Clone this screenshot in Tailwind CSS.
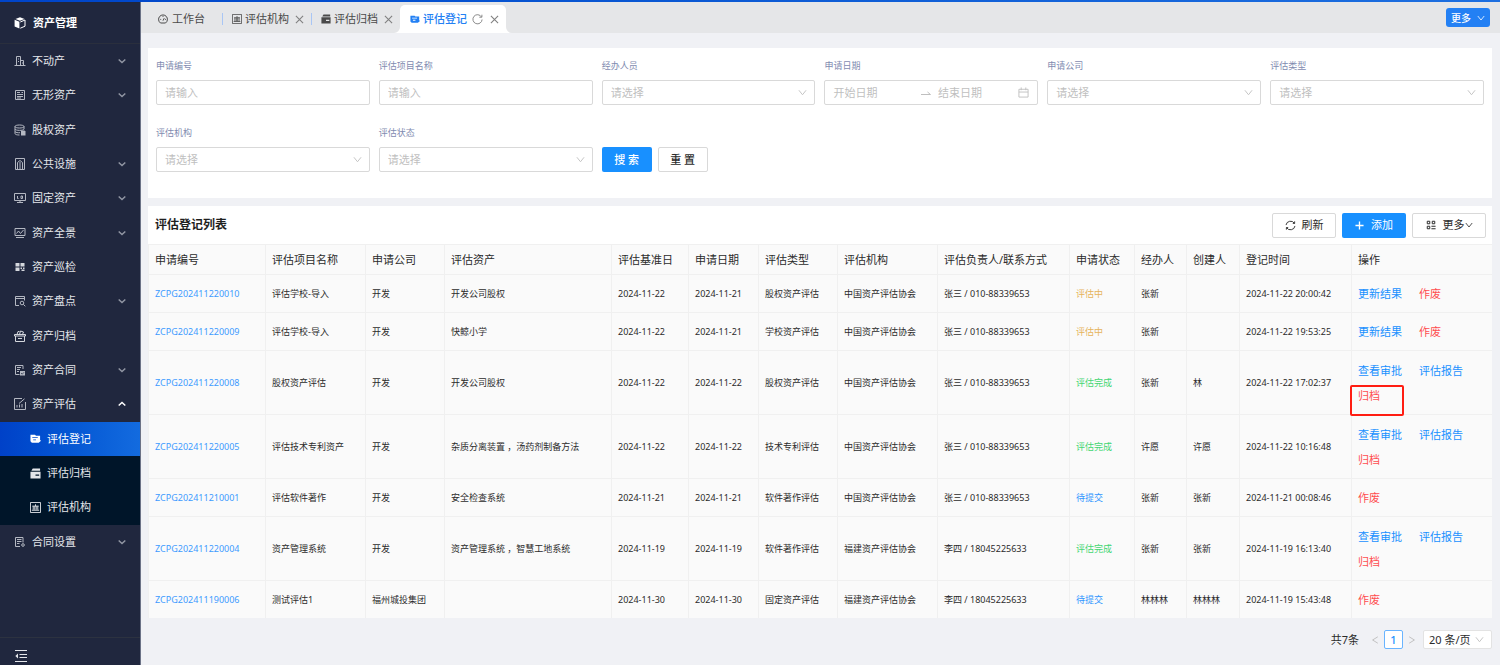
<!DOCTYPE html>
<html lang="zh-CN">
<head>
  <meta charset="UTF-8" />
  <meta name="viewport" content="width=device-width, initial-scale=1" />
  <title>资产管理 - 评估登记</title>
  <script src="https://cdn.jsdelivr.net/npm/@tailwindcss/browser@4"></script>
</head>
<body class="bg-[#f0f1f5] font-['Noto_Sans','Noto_Sans_CJK_SC',sans-serif] text-[11px] leading-4 text-[#2b2b2b]">

  <!-- Icon sprite -->
  <svg class="hidden" xmlns="http://www.w3.org/2000/svg">
    <symbol id="i-cube" viewBox="0 0 12 12"><path fill="currentColor" d="M6 .3 10.6 2 6 3.8 1.4 2zM.6 2.8l4.8 2v6.7L.6 9.4z"/><path fill="none" stroke="currentColor" d="M6.3 5 11 3v6.2l-4.7 2"/></symbol>
    <symbol id="i-building" viewBox="0 0 12 12"><path fill="none" stroke="currentColor" d="M.5 10.5h11M2.5 10.5v-9h4v9M6.5 5.5h3v5M4 4h1M4 6.5h1M8 8h1"/></symbol>
    <symbol id="i-doc" viewBox="0 0 12 12"><path fill="none" stroke="currentColor" d="M1.5 1.5h9v9h-9zM3 3.5h3M3 5.5h6M3 7.5h6M7.5 3.5H9M3 9h4"/></symbol>
    <symbol id="i-coins" viewBox="0 0 12 12"><path fill="none" stroke="currentColor" d="M1 2.5c0-2 9-2 9 0s-9 2-9 0v7c0 1 2 1.500 4.500 1.500M1 5c0 1.800 9 1.800 9 0V2.500M1 7.500C1.500 8.500 4 9 6 8.700"/><path fill="currentColor" d="M7 6.500h3.500l1 1v4H7z"/></symbol>
    <symbol id="i-facility" viewBox="0 0 12 12"><path fill="none" stroke="currentColor" d="M1.500.5h9v11h-9zM3.500 11V4.500L6 2.500l2.500 2V11M6 4v7"/></symbol>
    <symbol id="i-monitor" viewBox="0 0 12 12"><path fill="none" stroke="currentColor" d="M.5 1.500h11v7H.5zM3 10.500h6M6 8.500v2M3.500 4v2.500h1M7 4h1.500v2.500H7z"/></symbol>
    <symbol id="i-chart" viewBox="0 0 12 12"><path fill="none" stroke="currentColor" d="M1 1.500h10v7H1zM2.500 6.500l2-2.500 2 2.500L9.500 3M2 10.500h8"/></symbol>
    <symbol id="i-blocks" viewBox="0 0 12 12"><path fill="currentColor" d="M1.500 2h4v3.500h-4zM6.500 2h4v3.500h-4zM1.500 6.500h4V10h-4zM6.500 6.500H8V8H6.500zM9 6.500h1.500V8H9zM7.500 8.500h3V10h-3z"/></symbol>
    <symbol id="i-search" viewBox="0 0 12 12"><path fill="none" stroke="currentColor" d="M5 10.500H1.500v-9h9v4M1.500 3.500h9"/><circle cx="8" cy="8" r="1.800" fill="none" stroke="currentColor"/><path stroke="currentColor" d="m9.300 9.300 2 2"/></symbol>
    <symbol id="i-box" viewBox="0 0 12 12"><path fill="none" stroke="currentColor" d="M1.500 6v5.500h9V6M.5 6V4.500h11V6zM3 4.500l1-3h1.500M5.500 4.500l1-3.500 3 1-1 2.500M4 8.500h4"/></symbol>
    <symbol id="i-contract" viewBox="0 0 12 12"><path fill="none" stroke="currentColor" d="M5.500 10.500h-4v-9H9V5M3 3.500h4M3 5.500h3M3 7.500h2"/><path fill="currentColor" d="M6 7h5v4.500H6z"/><path stroke="#20273e" stroke-width=".7" d="m7 9 1.200 1.200L10 8.300" fill="none"/></symbol>
    <symbol id="i-assess" viewBox="0 0 12 12"><path fill="none" stroke="currentColor" d="M8 .5H.5v11h11V4M3 9.500V7M5.500 9.500v-3M8 9.500V6M5 5.500 10.500.8"/></symbol>
    <symbol id="i-folder" viewBox="0 0 12 12"><path fill="currentColor" fill-rule="evenodd" d="M.5 2h5l1 1h4.500v4.500l1 1L9.500 10.500H2L.5 9zM2.500 4.500v1h6v-1zM3.500 7v1h3V7z"/></symbol>
    <symbol id="i-archive" viewBox="0 0 12 12"><path fill="currentColor" fill-rule="evenodd" d="M3 .5h8v2.500H1.500zM.5 4h11v7.500H.5zM6 7v1.500h4V7z"/></symbol>
    <symbol id="i-org" viewBox="0 0 12 12"><path fill="none" stroke="currentColor" d="M.5.5h11v11H.5zM2.500 4.500h7M6 2.500v2M3.500 4.500v4M5.200 4.500v4M6.800 4.500v4M8.500 4.500v4M2 9h8"/></symbol>
    <symbol id="i-setting" viewBox="0 0 12 12"><path fill="none" stroke="currentColor" d="M6 10.500H1.500v-9H9v5M3 3.500h4.500M3 5.500h4.500M3 7.500h2.500"/><circle cx="9" cy="9" r="1.300" fill="none" stroke="currentColor"/></symbol>
    <symbol id="i-gauge" viewBox="0 0 12 12"><path fill="none" stroke="currentColor" stroke-width="1.200" d="M3 10.800a5.300 5.300 0 1 1 6 0zM6 8l1.500-3M2.800 6.500h1M6 2.500v1M8.500 6.500h1"/></symbol>
    <symbol id="i-menu" viewBox="0 0 12 12"><path fill="none" stroke="currentColor" d="M0 .5h12M4.500 4.500H12M4.500 7.500H12M0 11.500h12"/><path fill="currentColor" d="M3 3.500v5L.3 6z"/></symbol>
    <symbol id="i-down" viewBox="0 0 10 10"><path fill="none" stroke="currentColor" d="M1 2.500 5 7.500l4-5"/></symbol>
    <symbol id="i-arrow" viewBox="0 0 8 8"><path fill="none" stroke="currentColor" stroke-width="1.500" d="M.7 2.500 4 5.500l3.300-3"/></symbol>
    <symbol id="i-left" viewBox="0 0 10 10"><path fill="none" stroke="currentColor" stroke-width="1.200" d="M8.500 1 2 5l6.500 4"/></symbol>
    <symbol id="i-right" viewBox="0 0 10 10"><path fill="none" stroke="currentColor" stroke-width="1.200" d="M1.500 1 8 5 1.500 9"/></symbol>
    <symbol id="i-close" viewBox="0 0 10 10"><path fill="none" stroke="currentColor" stroke-width="1.200" d="m1 1 8 8M9 1 1 9"/></symbol>
    <symbol id="i-reload" viewBox="0 0 12 12"><path fill="none" stroke="currentColor" d="M10.300 3.200A5 5 0 1 0 11 6M10.800.8v2.700H8"/></symbol>
    <symbol id="i-sync" viewBox="0 0 12 12"><path fill="none" stroke="currentColor" d="M1.100 5.500a5 5 0 0 1 9.200-1.800M10.900 6.500a5 5 0 0 1-9.200 1.800M10.500 1.500v2.200H8.500M1.500 10.500V8.300h2"/></symbol>
    <symbol id="i-plus" viewBox="0 0 10 10"><path fill="none" stroke="currentColor" stroke-width="1.500" d="M5 .5v9M.5 5h9"/></symbol>
    <symbol id="i-apps" viewBox="0 0 12 12"><path fill="none" stroke="currentColor" stroke-width="1.200" d="M1.500 1.500h3v3h-3zM7.500 1.500h3v3h-3zM1.500 7.500h3v3h-3zM6.500 7.500h5M6.500 10.500h5"/></symbol>
    <symbol id="i-swap" viewBox="0 0 10 10"><path fill="none" stroke="currentColor" d="M0 6.500h9.500L6.500 4"/></symbol>
    <symbol id="i-calendar" viewBox="0 0 12 12"><path fill="none" stroke="currentColor" d="M1 2.500h10V11H1zM1 5.500h10M3.500.5v3M8.500.5v3"/></symbol>
  </svg>

  <div class="flex min-h-screen flex-col">
    <div class="h-[2px] bg-linear-to-r from-[#0044c9] to-[#1d6fe0]"></div>

    <div class="flex flex-1">
      <!-- Sidebar -->
      <aside class="flex w-[141px] shrink-0 flex-col border-r border-[#6b7286] bg-[#20273e] text-[#e4e6ea]">
        <div class="flex h-[42px] items-center gap-[7px] border-b border-[#2a2f3d] pl-[14px] font-bold text-white">
          <svg class="size-3"><use href="#i-cube" /></svg>
          <h1>资产管理</h1>
        </div>
        <nav class="flex h-[515px] flex-col">
          <a href="#" class="flex flex-1 items-center px-[14px]"><svg class="mr-[6px] size-3 text-[#b4b8c2]"><use href="#i-building" /></svg>不动产<svg class="ml-auto size-2 text-[#9196a3]"><use href="#i-arrow" /></svg></a>
          <a href="#" class="flex flex-1 items-center px-[14px]"><svg class="mr-[6px] size-3 text-[#b4b8c2]"><use href="#i-doc" /></svg>无形资产<svg class="ml-auto size-2 text-[#9196a3]"><use href="#i-arrow" /></svg></a>
          <a href="#" class="flex flex-1 items-center px-[14px]"><svg class="mr-[6px] size-3 text-[#b4b8c2]"><use href="#i-coins" /></svg>股权资产</a>
          <a href="#" class="flex flex-1 items-center px-[14px]"><svg class="mr-[6px] size-3 text-[#b4b8c2]"><use href="#i-facility" /></svg>公共设施<svg class="ml-auto size-2 text-[#9196a3]"><use href="#i-arrow" /></svg></a>
          <a href="#" class="flex flex-1 items-center px-[14px]"><svg class="mr-[6px] size-3 text-[#b4b8c2]"><use href="#i-monitor" /></svg>固定资产<svg class="ml-auto size-2 text-[#9196a3]"><use href="#i-arrow" /></svg></a>
          <a href="#" class="flex flex-1 items-center px-[14px]"><svg class="mr-[6px] size-3 text-[#b4b8c2]"><use href="#i-chart" /></svg>资产全景<svg class="ml-auto size-2 text-[#9196a3]"><use href="#i-arrow" /></svg></a>
          <a href="#" class="flex flex-1 items-center px-[14px]"><svg class="mr-[6px] size-3 text-[#d4d7dd]"><use href="#i-blocks" /></svg>资产巡检</a>
          <a href="#" class="flex flex-1 items-center px-[14px]"><svg class="mr-[6px] size-3 text-[#b4b8c2]"><use href="#i-search" /></svg>资产盘点<svg class="ml-auto size-2 text-[#9196a3]"><use href="#i-arrow" /></svg></a>
          <a href="#" class="flex flex-1 items-center px-[14px]"><svg class="mr-[6px] size-3 text-[#d4d7dd]"><use href="#i-box" /></svg>资产归档</a>
          <a href="#" class="flex flex-1 items-center px-[14px]"><svg class="mr-[6px] size-3 text-[#b4b8c2]"><use href="#i-contract" /></svg>资产合同<svg class="ml-auto size-2 text-[#9196a3]"><use href="#i-arrow" /></svg></a>
          <a href="#" class="flex flex-1 items-center px-[14px]"><svg class="mr-[6px] size-3 text-[#b4b8c2]"><use href="#i-assess" /></svg>资产评估<svg class="ml-auto size-2 rotate-180 text-white"><use href="#i-arrow" /></svg></a>
          <!-- Submenu -->
          <div class="flex flex-3 flex-col bg-[#001529]">
            <a href="#" class="flex flex-1 items-center bg-linear-to-r from-[#0041c8] to-[#136bdf] pl-[30px] text-white"><svg class="mr-[6px] size-[11px]"><use href="#i-folder" /></svg>评估登记</a>
            <a href="#" class="flex flex-1 items-center pl-[30px]"><svg class="mr-[6px] size-[11px]"><use href="#i-archive" /></svg>评估归档</a>
            <a href="#" class="flex flex-1 items-center pl-[30px]"><svg class="mr-[6px] size-[11px]"><use href="#i-org" /></svg>评估机构</a>
          </div>
          <a href="#" class="flex flex-1 items-center px-[14px]"><svg class="mr-[6px] size-3 text-[#b4b8c2]"><use href="#i-setting" /></svg>合同设置<svg class="ml-auto size-2 text-[#9196a3]"><use href="#i-arrow" /></svg></a>
        </nav>
        <div class="mt-auto flex h-7 items-center border-t border-[#2c3240] pt-[9px] pl-[15px]">
          <button type="button" aria-label="收起菜单"><svg class="size-3"><use href="#i-menu" /></svg></button>
        </div>
      </aside>

      <main class="min-w-0 flex-1">
        <!-- Tabs -->
        <div class="flex h-[31px] items-end justify-between bg-[#e5e6e8] pr-[10px] text-[#4a4a4a]">
          <div class="flex h-7 items-center">
            <a href="#" class="flex items-center gap-1 px-[17px]"><svg class="size-[10px]"><use href="#i-gauge" /></svg>工作台</a>
            <a href="#" class="flex h-3 items-center gap-[3px] border-l border-[#a9c6f5] pl-[9px]"><svg class="size-[10px]"><use href="#i-org" /></svg>评估机构</a>
            <button type="button" aria-label="关闭" class="pr-[7px] pl-[6px] text-[#808080]"><svg class="size-[9px]"><use href="#i-close" /></svg></button>
            <a href="#" class="flex h-3 items-center gap-[3px] border-l border-[#a9c6f5] pl-[9px]"><svg class="size-[10px]"><use href="#i-archive" /></svg>评估归档</a>
            <button type="button" aria-label="关闭" class="pl-[6px] text-[#808080]"><svg class="size-[9px]"><use href="#i-close" /></svg></button>
            <div class="flex h-7 items-end">
              <svg class="ml-px size-[6px] text-white" viewBox="0 0 6 6"><path fill="currentColor" d="M6 0v6H0a6 6 0 0 0 6-6z"/></svg>
              <div class="flex h-7 items-center rounded-t-[5px] bg-white pr-[7px] pl-[10px]">
                <a href="#" class="flex items-center gap-[3px] font-medium text-[#2380f4]"><svg class="size-[10px]"><use href="#i-folder" /></svg>评估登记</a>
                <button type="button" aria-label="刷新标签" class="ml-[5px] text-[#808080]"><svg class="size-[11px]"><use href="#i-reload" /></svg></button>
                <button type="button" aria-label="关闭" class="ml-[7px] text-[#808080]"><svg class="size-[9px]"><use href="#i-close" /></svg></button>
              </div>
              <svg class="size-[6px] text-white" viewBox="0 0 6 6"><path fill="currentColor" d="M0 0v6h6a6 6 0 0 1-6-6z"/></svg>
            </div>
          </div>
          <button type="button" class="mb-[6px] flex h-[19px] items-center gap-[6px] rounded-[3px] bg-[#2380f4] px-[5px] text-[10px] font-medium text-white">更多<svg class="size-2"><use href="#i-down" /></svg></button>
        </div>

        <div class="pt-[15px] pr-2 pl-[7px]">
          <!-- Search form -->
          <form class="grid grid-cols-6 gap-x-[9px] gap-y-[19px] bg-white px-2 pt-[10px] pb-[26px]">
            <div>
              <label for="applyNo" class="mb-[6px] block text-[9px] text-[#7f8bb0]">申请编号</label>
              <input id="applyNo" type="text" placeholder="请输入" class="h-[25px] w-full rounded-[2px] border border-[#d9d9d9] px-2 placeholder:text-[#bfbfbf]" />
            </div>
            <div>
              <label for="projectName" class="mb-[6px] block text-[9px] text-[#7f8bb0]">评估项目名称</label>
              <input id="projectName" type="text" placeholder="请输入" class="h-[25px] w-full rounded-[2px] border border-[#d9d9d9] px-2 placeholder:text-[#bfbfbf]" />
            </div>
            <div>
              <label for="handler" class="mb-[6px] block text-[9px] text-[#7f8bb0]">经办人员</label>
              <div class="relative">
                <select id="handler" class="block h-[25px] w-full appearance-none rounded-[2px] border border-[#d9d9d9] px-2 text-[#bfbfbf]"><option>请选择</option></select>
                <svg class="pointer-events-none absolute top-2 right-2 size-[9px] text-[#bfbfbf]"><use href="#i-down" /></svg>
              </div>
            </div>
            <div>
              <label for="startDate" class="mb-[6px] block text-[9px] text-[#7f8bb0]">申请日期</label>
              <div class="flex h-[25px] items-center rounded-[2px] border border-[#d9d9d9] px-2 text-[#bfbfbf]">
                <input id="startDate" type="text" placeholder="开始日期" class="w-0 flex-1 placeholder:text-[#bfbfbf]" />
                <svg class="mx-[7px] size-[10px] shrink-0"><use href="#i-swap" /></svg>
                <input id="endDate" type="text" placeholder="结束日期" aria-label="结束日期" class="w-0 flex-1 placeholder:text-[#bfbfbf]" />
                <svg class="size-[11px] shrink-0"><use href="#i-calendar" /></svg>
              </div>
            </div>
            <div>
              <label for="company" class="mb-[6px] block text-[9px] text-[#7f8bb0]">申请公司</label>
              <div class="relative">
                <select id="company" class="block h-[25px] w-full appearance-none rounded-[2px] border border-[#d9d9d9] px-2 text-[#bfbfbf]"><option>请选择</option></select>
                <svg class="pointer-events-none absolute top-2 right-2 size-[9px] text-[#bfbfbf]"><use href="#i-down" /></svg>
              </div>
            </div>
            <div>
              <label for="assessType" class="mb-[6px] block text-[9px] text-[#7f8bb0]">评估类型</label>
              <div class="relative">
                <select id="assessType" class="block h-[25px] w-full appearance-none rounded-[2px] border border-[#d9d9d9] px-2 text-[#bfbfbf]"><option>请选择</option></select>
                <svg class="pointer-events-none absolute top-2 right-2 size-[9px] text-[#bfbfbf]"><use href="#i-down" /></svg>
              </div>
            </div>
            <div>
              <label for="agency" class="mb-[6px] block pt-px text-[9px] text-[#7f8bb0]">评估机构</label>
              <div class="relative">
                <select id="agency" class="block h-[25px] w-full appearance-none rounded-[2px] border border-[#d9d9d9] px-2 text-[#bfbfbf]"><option>请选择</option></select>
                <svg class="pointer-events-none absolute top-2 right-2 size-[9px] text-[#bfbfbf]"><use href="#i-down" /></svg>
              </div>
            </div>
            <div>
              <label for="status" class="mb-[6px] block pt-px text-[9px] text-[#7f8bb0]">评估状态</label>
              <div class="relative">
                <select id="status" class="block h-[25px] w-full appearance-none rounded-[2px] border border-[#d9d9d9] px-2 text-[#bfbfbf]"><option>请选择</option></select>
                <svg class="pointer-events-none absolute top-2 right-2 size-[9px] text-[#bfbfbf]"><use href="#i-down" /></svg>
              </div>
            </div>
            <div class="flex items-end gap-[6px]">
              <button type="submit" class="h-[25px] w-[50px] rounded-[2px] bg-[#1890ff] font-medium text-white">搜 索</button>
              <button type="reset" class="h-[25px] w-[50px] rounded-[2px] border border-[#d9d9d9] bg-white font-medium">重 置</button>
            </div>
          </form>

          <!-- List -->
          <section class="mt-2 bg-white">
            <div class="flex h-[38px] items-center gap-[6px] pr-[6px] pl-[7px]">
              <h2 class="mr-auto text-[12px] font-bold text-[#1f1f1f]">评估登记列表</h2>
              <button type="button" class="flex h-[25px] w-16 items-center justify-center gap-[6px] rounded-[2px] border border-[#d9d9d9]"><svg class="size-[11px]"><use href="#i-sync" /></svg>刷新</button>
              <button type="button" class="flex h-[25px] w-16 items-center justify-center gap-[7px] rounded-[2px] bg-[#1890ff] text-white"><svg class="size-[9px]"><use href="#i-plus" /></svg>添加</button>
              <button type="button" class="flex h-[25px] w-[74px] items-center justify-center rounded-[2px] border border-[#d9d9d9]"><svg class="mr-[7px] size-[10px]"><use href="#i-apps" /></svg>更多<svg class="size-[8px]"><use href="#i-down" /></svg></button>
            </div>
            <table class="w-full table-fixed border-separate border-spacing-0 bg-[#fafafa] text-left">
              <colgroup>
                <col class="w-[117px]" />
                <col class="w-[100px]" />
                <col class="w-[79px]" />
                <col class="w-[167px]" />
                <col class="w-[77px]" />
                <col class="w-[70px]" />
                <col class="w-[79px]" />
                <col class="w-[100px]" />
                <col class="w-[132px]" />
                <col class="w-[65px]" />
                <col class="w-[52px]" />
                <col class="w-[53px]" />
                <col class="w-[112px]" />
                <col />
              </colgroup>
              <thead>
                <tr id="tableHead"></tr>
              </thead>
              <tbody id="assessTable" class="text-[9px]"></tbody>
            </table>
          </section>

          <!-- Pagination -->
          <div class="flex items-center justify-end pt-3">
            <span class="mr-[12px]">共7条</span>
            <button type="button" aria-label="上一页" class="text-[#bfbfbf]"><svg class="size-2"><use href="#i-left" /></svg></button>
            <button type="button" class="mx-[5px] size-[19px] rounded-[2px] border border-[#69b4ff] bg-white leading-none font-medium text-[#1890ff]">1</button>
            <button type="button" aria-label="下一页" class="text-[#bfbfbf]"><svg class="size-2"><use href="#i-right" /></svg></button>
            <div class="relative ml-[7px]">
              <select aria-label="每页条数" class="block h-[19px] w-[69px] appearance-none rounded-[2px] border border-[#e3e3e3] bg-white px-[5px]"><option>20 条/页</option></select>
              <svg class="pointer-events-none absolute top-[5px] right-2 size-[9px] text-[#bfbfbf]"><use href="#i-down" /></svg>
            </div>
          </div>
        </div>
      </main>
    </div>
  </div>

  <script>
    const headers = ['申请编号', '评估项目名称', '申请公司', '评估资产', '评估基准日', '申请日期', '评估类型', '评估机构', '评估负责人/联系方式', '申请状态', '经办人', '创建人', '登记时间', '操作'];

    const rows = [
      ['ZCPG202411220010', '评估学校-导入', '开发', '开发公司股权', '2024-11-22', '2024-11-21', '股权资产评估', '中国资产评估协会', '张三 / 010-88339653', '评估中', '张新', '', '2024-11-22 20:00:42', ['更新结果', '作废']],
      ['ZCPG202411220009', '评估学校-导入', '开发', '快鲸小学', '2024-11-22', '2024-11-21', '学校资产评估', '中国资产评估协会', '张三 / 010-88339653', '评估中', '张新', '', '2024-11-22 19:53:25', ['更新结果', '作废']],
      ['ZCPG202411220008', '股权资产评估', '开发', '开发公司股权', '2024-11-22', '2024-11-22', '股权资产评估', '中国资产评估协会', '张三 / 010-88339653', '评估完成', '张新', '林', '2024-11-22 17:02:37', ['查看审批', '评估报告', '归档'], true],
      ['ZCPG202411220005', '评估技术专利资产', '开发', '杂质分离装置 ，汤药剂制备方法', '2024-11-22', '2024-11-22', '技术专利评估', '中国资产评估协会', '张三 / 010-88339653', '评估完成', '许愿', '许愿', '2024-11-22 10:16:48', ['查看审批', '评估报告', '归档']],
      ['ZCPG202411210001', '评估软件著作', '开发', '安全检查系统', '2024-11-21', '2024-11-21', '软件著作评估', '中国资产评估协会', '张三 / 010-88339653', '待提交', '张新', '张新', '2024-11-21 00:08:46', ['作废']],
      ['ZCPG202411220004', '资产管理系统', '开发', '资产管理系统 ，智慧工地系统', '2024-11-19', '2024-11-19', '软件著作评估', '福建资产评估协会', '李四 / 18045225633', '评估完成', '张新', '张新', '2024-11-19 16:13:40', ['查看审批', '评估报告', '归档']],
      ['ZCPG202411190006', '测试评估1', '福州城投集团', '', '2024-11-30', '2024-11-30', '固定资产评估', '福建资产评估协会', '李四 / 18045225633', '待提交', '林林林', '林林林', '2024-11-19 15:43:48', ['作废']]
    ];

    const statusColor = {
      '评估中': 'text-[#e6b45c]',
      '评估完成': 'text-[#43d672]',
      '待提交': 'text-[#2f95ff]'
    };

    document.getElementById('tableHead').innerHTML = headers.map(h =>
      `<th class="h-[30px] border-t border-l border-[#f0f0f0] px-[6px] font-normal whitespace-nowrap">${h}</th>`
    ).join('');

    // 作废 and 归档 are destructive, the rest are plain links
    function renderActions(actions, marked) {
      return actions.map(name => {
        const danger = name === '作废' || name === '归档';
        const mark = marked && name === '归档'
          ? '<span class="pointer-events-none absolute top-[2px] -left-2 h-[31px] w-[54px] rounded-[2px] border-2 border-[#ff1d12]"></span>'
          : '';
        return `<a href="#" class="relative ${danger ? 'text-[#ff4d4f]' : 'text-[#1890ff]'}">${name}${mark}</a>`;
      }).join('');
    }

    const table = document.getElementById('assessTable');
    rows.forEach(row => {
      const actions = row[13];
      const tr = document.createElement('tr');
      tr.className = actions.length > 2 ? 'h-[64px]' : 'h-[38px]';
      tr.innerHTML = row.slice(0, 13).map((text, i) => {
        let cell = text;
        if (i === 0) cell = `<a href="#" class="text-[#3d9bff]">${text}</a>`;
        if (i === 9) cell = `<span class="${statusColor[text]}">${text}</span>`;
        return `<td class="border-t border-l border-[#f0f0f0] px-[6px] whitespace-nowrap">${cell}</td>`;
      }).join('') + `
        <td class="border-t border-l border-[#f0f0f0] px-[6px]">
          <div class="flex flex-wrap gap-x-[17px] text-[11px] leading-[25px]">${renderActions(actions, row[14])}</div>
        </td>`;
      table.appendChild(tr);
    });
  </script>
</body>
</html>
